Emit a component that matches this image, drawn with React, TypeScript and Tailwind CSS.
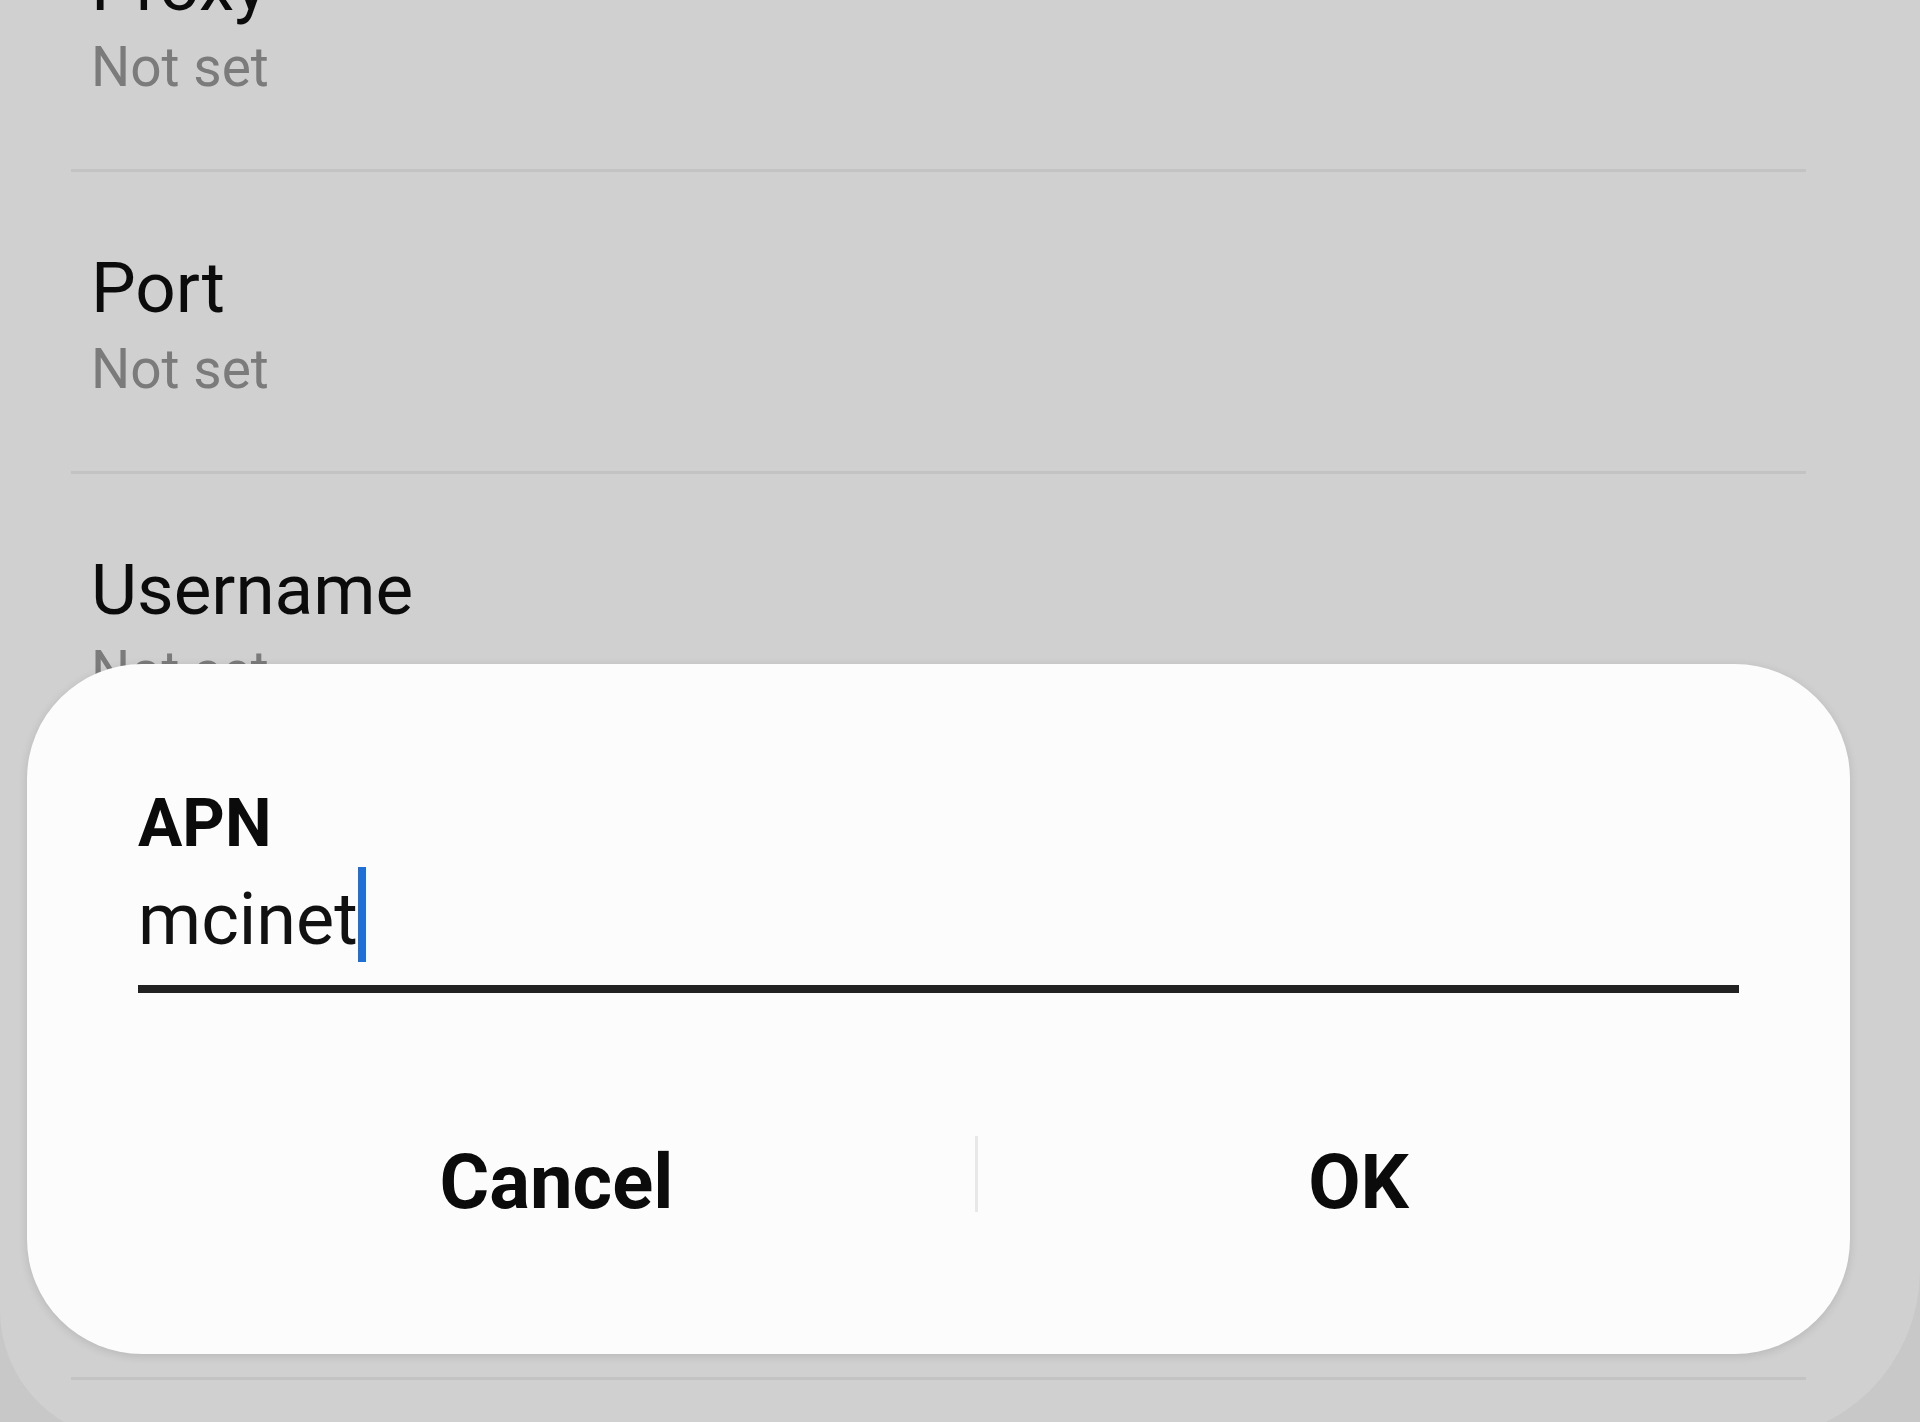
const rows = [
  { title: "Proxy", value: "Not set" },
  { title: "Port", value: "Not set" },
  { title: "Username", value: "Not set" },
  { title: "Password", value: "Not set" },
  { title: "Server", value: "Not set" },
];

function SettingRow({ title, value }: { title: string; value: string }) {
  return (
    <div>
      <div className="pl-[91px] pt-[76px] pb-[71px]">
        <div className="text-[71px] leading-[80px] text-[#0b0b0b]">{title}</div>
        <div className="mt-[10px] text-[55px] leading-[62px] text-[#7b7b7b]">{value}</div>
      </div>
      <div className="ml-[71px] mr-[114px] h-[3px] bg-[#c3c3c3]" />
    </div>
  );
}

function ApnDialog() {
  return (
    <div className="absolute left-[27px] top-[664px] w-[1823px] rounded-[115px] bg-[#fcfcfc] px-[111px] pt-[121px] pb-[128px] shadow-[0_2px_10px_rgba(0,0,0,0.12)]">
      <div className="text-[66px] leading-[78px] font-bold text-[#0b0b0b]">APN</div>
      <div className="mt-[12px] flex items-start">
        <span className="text-[72px] leading-[90px] text-[#111]">mcinet</span>
        <span className="mt-[-8px] h-[95px] w-[8px] bg-[#1f6fd6]" />
      </div>
      <div className="mt-[20px] h-[8px] bg-[#222]" />
      <div className="mt-[145px] grid grid-cols-[837px_3px_1fr] items-start">
        <button className="text-center text-[76px] leading-[88px] font-bold text-[#0b0b0b]">Cancel</button>
        <div className="mt-[-2px] h-[76px] w-[3px] bg-[#e8e8e8]" />
        <button className="text-center text-[76px] leading-[88px] font-bold text-[#0b0b0b]">OK</button>
      </div>
    </div>
  );
}

export default function App() {
  return (
    <div
      className="relative h-[1422px] w-full overflow-hidden bg-[#c8c8c9]"
      style={{ fontFamily: "Roboto, 'Noto Sans', sans-serif" }}
    >
      <div className="relative h-[1440px] overflow-hidden rounded-bl-[130px] rounded-br-[170px] bg-[#d0d0d0]">
        <div className="mt-[-130px]">
          {rows.map((r) => (
            <SettingRow key={r.title} title={r.title} value={r.value} />
          ))}
        </div>
        <ApnDialog />
      </div>
    </div>
  );
}
